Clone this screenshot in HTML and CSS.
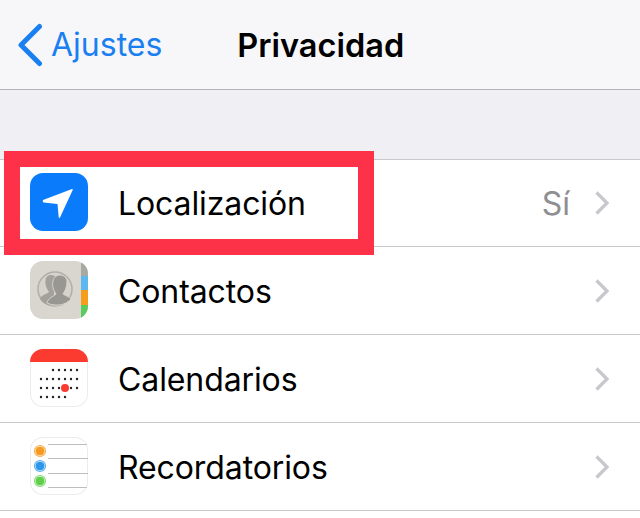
FILE: index.html
```html
<!DOCTYPE html>
<html lang="es">
<head>
	<meta charset="UTF-8">
	<title>Privacidad</title>
	<link rel="stylesheet" href="styles.css">
</head>
<body>
	<div class="navbar">
		<div class="back">
			<svg class="back-icon" width="28" height="44" viewBox="0 0 28 44"><path d="M24.5 3.5 L6 22 L24.5 40.5" fill="none" stroke="#1a7ff0" stroke-width="5" stroke-linecap="round" stroke-linejoin="round"/></svg>
			<span>Ajustes</span>
		</div>
		<div class="title">Privacidad</div>
	</div>

	<div class="gap"></div>

	<ul class="list">
		<li class="row">
			<div class="icon icon-location">
				<svg width="58" height="58" viewBox="0 0 58 58"><path d="M13 27 L42 16 Q43 15.800 42.700 17 L30 44.500 Q29 45.500 28.700 44 L27.500 31 L13.500 29.500 Q12.200 28 13 27 Z" fill="#fff"/></svg>
			</div>
			<span class="label">Localización</span>
			<span class="value">Sí</span>
			<svg class="chevron" width="16" height="26" viewBox="0 0 16 26"><path d="M2.5 2.5 L13 13 L2.5 23.5" fill="none" stroke="#c7c7cc" stroke-width="3.2"/></svg>
		</li>
		<li class="row">
			<div class="icon icon-contacts">
				<svg width="58" height="58" viewBox="0 0 58 58">
					<rect x="51" y="0" width="7" height="15" fill="#a9a9a4"/>
					<rect x="51" y="15" width="7" height="14" fill="#5cb8ee"/>
					<rect x="51" y="29" width="7" height="15" fill="#f59e1c"/>
					<rect x="51" y="44" width="7" height="14" fill="#5ccb5f"/>
					<circle cx="25" cy="28" r="17" fill="#d5d3cc" stroke="#b0aea8" stroke-width="1.5"/>
					<path d="M10 38 C11 34 17 33 19 31 C16 27 15 23 15.500 19 C16 15 19 14 21 14 C24 14 27 16 27 20 C27 25 25 28 24 31 L24 43 C18 45 13 43 10 38 Z" fill="#a3a19c"/>
					<path d="M17 42 C18 37 23 36 26 33 C23 29 22 24 23 20 C24 16 27 14 30 14 C34 14 37 17 37 21 C37 26 35 30 33 33 C36 35 40 36 41 38 C36 44 26 46 17 42 Z" fill="#999791" stroke="#d5d3cc" stroke-width="1"/>
				</svg>
			</div>
			<span class="label">Contactos</span>
			<svg class="chevron" width="16" height="26" viewBox="0 0 16 26"><path d="M2.5 2.5 L13 13 L2.5 23.5" fill="none" stroke="#c7c7cc" stroke-width="3.2"/></svg>
		</li>
		<li class="row">
			<div class="icon icon-calendar">
				<svg width="58" height="58" viewBox="0 0 58 58">
					<rect x="0" y="0" width="58" height="13" fill="#fb3b30"/>
					<g fill="#222">
						<circle cx="23" cy="21" r="1.200"/><circle cx="29" cy="21" r="1.200"/><circle cx="35" cy="21" r="1.200"/><circle cx="41" cy="21" r="1.200"/><circle cx="47" cy="21" r="1.200"/>
						<circle cx="11" cy="30" r="1.200"/><circle cx="17" cy="30" r="1.200"/><circle cx="23" cy="30" r="1.200"/><circle cx="29" cy="30" r="1.200"/><circle cx="35" cy="30" r="1.200"/><circle cx="41" cy="30" r="1.200"/><circle cx="47" cy="30" r="1.200"/>
						<circle cx="11" cy="39" r="1.200"/><circle cx="17" cy="39" r="1.200"/><circle cx="23" cy="39" r="1.200"/><circle cx="29" cy="39" r="1.200"/><circle cx="41" cy="39" r="1.200"/><circle cx="47" cy="39" r="1.200"/>
						<circle cx="11" cy="48" r="1.200"/><circle cx="17" cy="48" r="1.200"/><circle cx="23" cy="48" r="1.200"/><circle cx="29" cy="48" r="1.200"/><circle cx="35" cy="48" r="1.200"/>
					</g>
					<circle cx="35" cy="39" r="4" fill="#fb3b30"/>
				</svg>
			</div>
			<span class="label">Calendarios</span>
			<svg class="chevron" width="16" height="26" viewBox="0 0 16 26"><path d="M2.5 2.5 L13 13 L2.5 23.5" fill="none" stroke="#c7c7cc" stroke-width="3.2"/></svg>
		</li>
		<li class="row">
			<div class="icon icon-reminders">
				<svg width="58" height="58" viewBox="0 0 58 58">
					<g stroke="#bdbdbd" stroke-width="1">
						<path d="M18 7.500 H58"/><path d="M18 21.500 H58"/><path d="M18 36.500 H58"/><path d="M18 50.500 H58"/>
					</g>
					<circle cx="10" cy="14" r="4.800" fill="#f59a23" stroke="#fff" stroke-width=".6"/>
					<circle cx="10" cy="14" r="5.500" fill="none" stroke="#f7b04f" stroke-width="1.200"/>
					<circle cx="10" cy="29" r="4.800" fill="#2f97ea" stroke="#fff" stroke-width=".6"/>
					<circle cx="10" cy="29" r="5.500" fill="none" stroke="#5db0f0" stroke-width="1.200"/>
					<circle cx="10" cy="44" r="4.800" fill="#62cf4c" stroke="#fff" stroke-width=".6"/>
					<circle cx="10" cy="44" r="5.500" fill="none" stroke="#86dc75" stroke-width="1.200"/>
				</svg>
			</div>
			<span class="label">Recordatorios</span>
			<svg class="chevron" width="16" height="26" viewBox="0 0 16 26"><path d="M2.5 2.5 L13 13 L2.5 23.5" fill="none" stroke="#c7c7cc" stroke-width="3.2"/></svg>
		</li>
	</ul>

	<div class="highlight"></div>
</body>
</html>
```

FILE: styles.css
```css
html, body {
	margin: 0;
	padding: 0;
}

body {
	position: relative;
	height: 518px;
	overflow: hidden;
	background: #fff;
	font-family: Inter, "Liberation Sans", sans-serif;
	color: #000;
}

/* barra superior */
.navbar {
	position: relative;
	height: 89px;
	box-sizing: content-box;
	display: flex;
	align-items: center;
	background: #f7f7f9;
	border-bottom: 1px solid #b4b4b6;
}

.back {
	display: flex;
	align-items: center;
	gap: 8px;
	padding-left: 15px;
	font-size: 32px;
	color: #1a7ff0;
}

.back-icon {
	display: block;
}

.title {
	margin-left: 75px;
	padding-top: 1px;
	font-size: 32.5px;
	font-weight: 600;
}

.gap {
	height: 69px;
	background: #efeff4;
}

.list {
	margin: 0;
	padding: 0;
	list-style: none;
	border-top: 1px solid #c8c7cc;
}

.row {
	height: 87px;
	display: flex;
	align-items: center;
	padding-left: 30px;
	padding-right: 30px;
	position: relative;
	border-bottom: 1px solid #c8c7cc;
}

.row:first-child {
	height: 86px;
}

.icon {
	width: 58px;
	height: 58px;
	flex: none;
	margin-bottom: 1px;
	border-radius: 13px;
	overflow: hidden;
}

.row:first-child .icon {
	margin-bottom: 2px;
}

.icon svg {
	display: block;
}

.icon-location {
	background: #0a7bfb;
}

.icon-contacts {
	background: #d8d6cf;
}

.icon-calendar,
.icon-reminders {
	background: #fff;
	box-shadow: inset 0 0 0 1px #ececec;
}

.label {
	margin-left: 30px;
	padding-top: 2px;
	font-size: 32px;
	letter-spacing: -.1px;
	flex: 1;
}

.row:first-child .label,
.row:first-child .value {
	padding-top: 0;
}

.value {
	padding-top: 2px;
	font-size: 32px;
	color: #8e8e93;
	margin-right: 24px;
}

.chevron {
	flex: none;
	display: block;
}

/* recuadro rojo sobre la primera fila */
.highlight {
	position: absolute;
	left: 4px;
	top: 151px;
	width: 338px;
	height: 72px;
	border: 16px solid #fd3148;
}
```
